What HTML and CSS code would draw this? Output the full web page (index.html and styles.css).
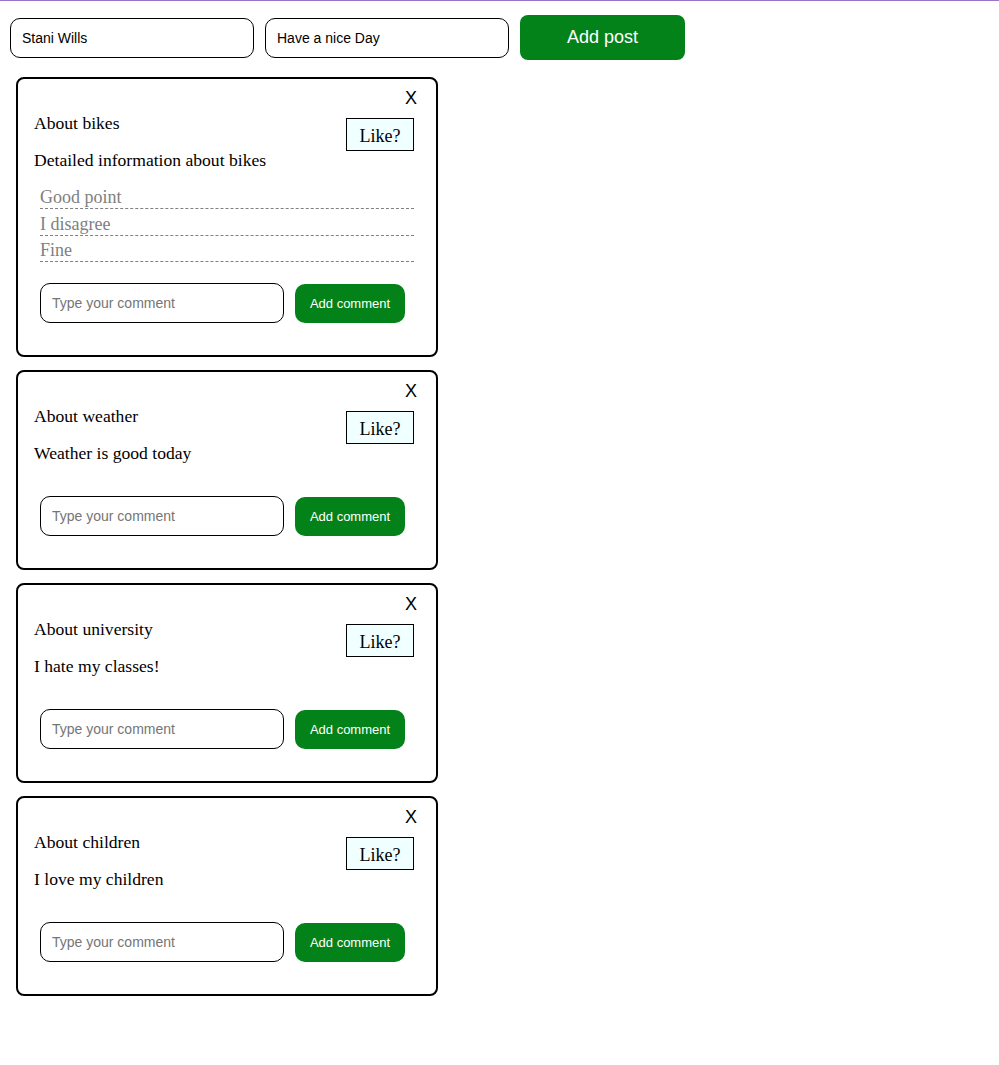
FILE: index.html
```html
<!DOCTYPE html>
<html lang="en">
<head>
<meta charset="utf-8">
<title>Posts</title>
<link rel="stylesheet" href="styles.css">
</head>
<body>
<div class="page">
  <form class="new-post">
    <input class="field" type="text" value="Stani Wills">
    <input class="field" type="text" value="Have a nice Day">
    <button class="add-post" type="button">Add post</button>
  </form>

  <div class="posts">
    <div class="post">
      <div class="post-top"><span class="close">X</span></div>
      <div class="post-head">
        <div class="post-title">About bikes</div>
        <button class="like" type="button">Like?</button>
      </div>
      <div class="post-body">Detailed information about bikes</div>
      <ul class="comments">
        <li class="comment">Good point</li>
        <li class="comment">I disagree</li>
        <li class="comment">Fine</li>
      </ul>
      <div class="comment-form">
        <input class="comment-input" type="text" placeholder="Type your comment">
        <button class="add-comment" type="button">Add comment</button>
      </div>
    </div>

    <div class="post post--empty">
      <div class="post-top"><span class="close">X</span></div>
      <div class="post-head">
        <div class="post-title">About weather</div>
        <button class="like" type="button">Like?</button>
      </div>
      <div class="post-body">Weather is good today</div>
      <div class="comment-form">
        <input class="comment-input" type="text" placeholder="Type your comment">
        <button class="add-comment" type="button">Add comment</button>
      </div>
    </div>

    <div class="post post--empty">
      <div class="post-top"><span class="close">X</span></div>
      <div class="post-head">
        <div class="post-title">About university</div>
        <button class="like" type="button">Like?</button>
      </div>
      <div class="post-body">I hate my classes!</div>
      <div class="comment-form">
        <input class="comment-input" type="text" placeholder="Type your comment">
        <button class="add-comment" type="button">Add comment</button>
      </div>
    </div>

    <div class="post post--empty">
      <div class="post-top"><span class="close">X</span></div>
      <div class="post-head">
        <div class="post-title">About children</div>
        <button class="like" type="button">Like?</button>
      </div>
      <div class="post-body">I love my children</div>
      <div class="comment-form">
        <input class="comment-input" type="text" placeholder="Type your comment">
        <button class="add-comment" type="button">Add comment</button>
      </div>
    </div>
  </div>
</div>
</body>
</html>
```

FILE: styles.css
```css
* { box-sizing: border-box; }

html, body {
  margin: 0;
  padding: 0;
  background: #ffffff;
}

body {
  border-top: 1px solid #9d72c6;
  font-family: "Liberation Serif", "Times New Roman", serif;
  color: #000;
}

.page {
  padding: 14px 10px 40px;
}

.new-post {
  display: flex;
  align-items: center;
  gap: 11px;
  margin: 0;
}

.field {
  width: 244px;
  height: 40px;
  border: 1px solid #000;
  border-radius: 10px;
  padding: 0 11px;
  font-family: "Liberation Sans", Arial, sans-serif;
  font-size: 14px;
  color: #000;
  background: #fff;
  outline: none;
}

.add-post {
  width: 165px;
  height: 45px;
  border: none;
  border-radius: 8px;
  background: #038219;
  color: #fff;
  font-family: "Liberation Sans", Arial, sans-serif;
  font-size: 18px;
  padding: 0;
}

.posts {
  margin-top: 17px;
  margin-left: 6px;
  display: flex;
  flex-direction: column;
  gap: 13px;
  width: 422px;
}

.post {
  border: 2px solid #000;
  border-radius: 8px;
  padding: 8px 22px 32px 16px;
  background: #fff;
}

.post-top {
  display: flex;
  justify-content: flex-end;
  height: 21px;
  line-height: 21px;
}

.close {
  font-family: "Liberation Sans", Arial, sans-serif;
  font-size: 18px;
  margin-right: -3px;
  margin-top: 1px;
}

.post-head {
  margin-top: 5px;
  display: flex;
  justify-content: space-between;
  align-items: flex-start;
  height: 37px;
}

.post-title {
  font-size: 17.6px;
  line-height: 20px;
}

.like {
  margin-top: 5px;
  width: 68px;
  height: 33px;
  border: 1px solid #000;
  background: #f0ffff;
  font-family: "Liberation Serif", "Times New Roman", serif;
  font-size: 18px;
  color: #000;
  padding: 3px 0 0;
}

.post-body {
  font-size: 17.6px;
  line-height: 20px;
}

.comments {
  list-style: none;
  margin: 17px 0 21px;
  padding: 0 0 0 6px;
}

.comment {
  font-size: 18px;
  line-height: 21px;
  color: #808080;
  border-bottom: 1px dashed #808080;
  margin-bottom: 4.5px;
}

.comment-form {
  display: flex;
  align-items: center;
  gap: 11px;
  padding-left: 6px;
}

.post--empty .comment-form {
  margin-top: 33px;
}

.comment-input {
  width: 244px;
  height: 40px;
  border: 1px solid #000;
  border-radius: 10px;
  padding: 0 11px;
  font-family: "Liberation Sans", Arial, sans-serif;
  font-size: 14px;
  background: #fff;
  outline: none;
}

.comment-input::placeholder {
  color: #757575;
}

.add-comment {
  width: 110px;
  height: 39px;
  border: none;
  border-radius: 10px;
  background: #038219;
  color: #fff;
  font-family: "Liberation Sans", Arial, sans-serif;
  font-size: 13px;
  padding: 0;
}
```
